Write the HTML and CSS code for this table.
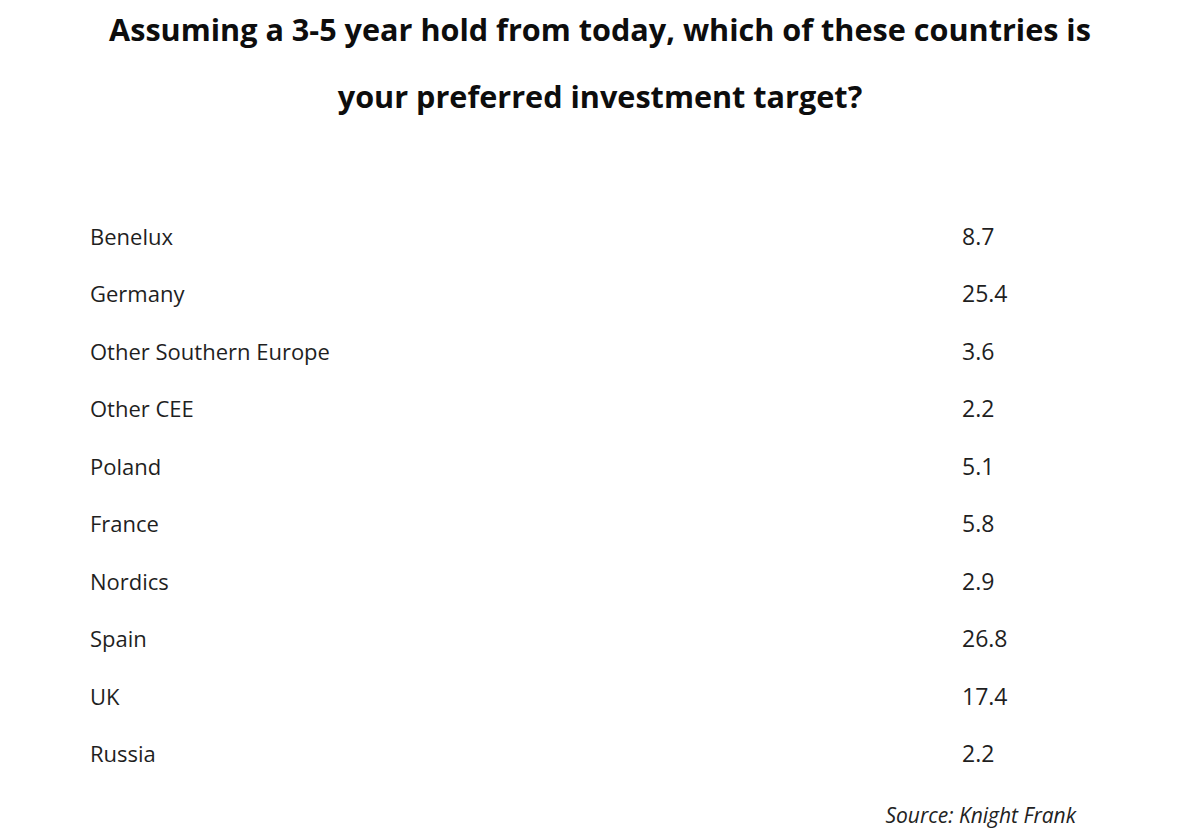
FILE: index.html
```html
<!DOCTYPE html>
<html lang="en">
<head>
<meta charset="utf-8">
<title>Preferred investment target</title>
<link rel="stylesheet" href="styles.css">
</head>
<body>
<main class="page">
  <h1 class="title">Assuming a 3-5 year hold from today, which of these countries is<br>your preferred investment target?</h1>
  <div class="table">
    <div class="row"><span class="label">Benelux</span><span class="value">8.7</span></div>
    <div class="row"><span class="label">Germany</span><span class="value">25.4</span></div>
    <div class="row"><span class="label">Other Southern Europe</span><span class="value">3.6</span></div>
    <div class="row"><span class="label">Other CEE</span><span class="value">2.2</span></div>
    <div class="row"><span class="label">Poland</span><span class="value">5.1</span></div>
    <div class="row"><span class="label">France</span><span class="value">5.8</span></div>
    <div class="row"><span class="label">Nordics</span><span class="value">2.9</span></div>
    <div class="row"><span class="label">Spain</span><span class="value">26.8</span></div>
    <div class="row"><span class="label">UK</span><span class="value">17.4</span></div>
    <div class="row"><span class="label">Russia</span><span class="value">2.2</span></div>
  </div>
  <p class="source">Source: Knight Frank</p>
</main>
</body>
</html>
```

FILE: styles.css
```css
html, body {
  margin: 0;
  padding: 0;
  background: #ffffff;
}
body {
  width: 1200px;
  height: 840px;
  overflow: hidden;
  font-family: "Open Sans", "Liberation Sans", sans-serif;
  color: #1f1f1f;
}
.page {
  display: flex;
  flex-direction: column;
}
.title {
  margin: -4px 0 0;
  text-align: center;
  font-size: 30.6px;
  font-weight: 700;
  line-height: 67px;
  letter-spacing: 0;
  color: #0d0d0d;
}
.table {
  display: flex;
  flex-direction: column;
  margin-top: 77px;
  padding-left: 90px;
}
.row {
  display: grid;
  grid-template-columns: 872px auto;
  height: 57.5px;
  align-items: center;
  font-size: 22px;
  font-weight: 500;
}
.value {
  font-size: 23px;
}
.source {
  margin: 18px 124px 0 0;
  align-self: flex-end;
  font-style: italic;
  font-size: 21px;
  line-height: 30px;
  letter-spacing: 0;
  color: #222222;
}
```
